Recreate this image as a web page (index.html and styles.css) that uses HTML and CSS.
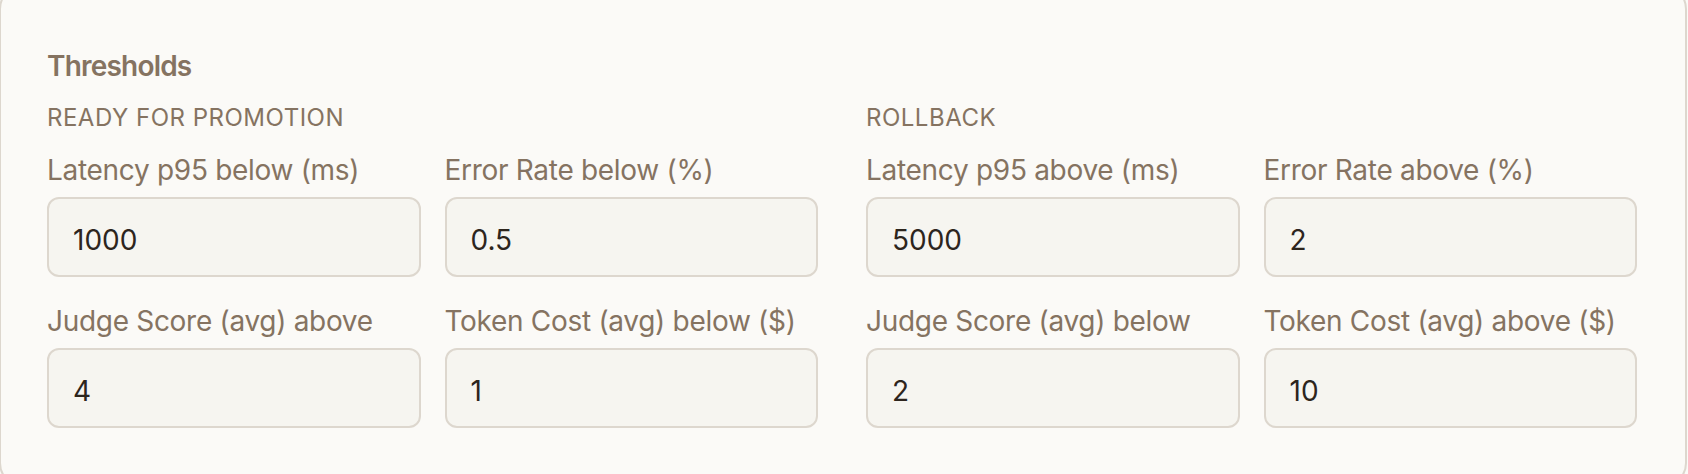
FILE: index.html
```html
<!DOCTYPE html>
<html lang="en">
<head>
<meta charset="utf-8">
<title>Thresholds</title>
<link rel="stylesheet" href="styles.css">
</head>
<body>
<section class="card">
  <h2 class="card-title">Thresholds</h2>
  <div class="groups">
    <div class="group">
      <h3 class="group-title">READY FOR PROMOTION</h3>
      <div class="fields">
        <label class="field"><span class="field-label">Latency p95 below (ms)</span><input class="field-input" type="text" value="1000"></label>
        <label class="field"><span class="field-label">Error Rate below (%)</span><input class="field-input" type="text" value="0.5"></label>
        <label class="field"><span class="field-label">Judge Score (avg) above</span><input class="field-input" type="text" value="4"></label>
        <label class="field"><span class="field-label">Token Cost (avg) below ($)</span><input class="field-input" type="text" value="1"></label>
      </div>
    </div>
    <div class="group">
      <h3 class="group-title">ROLLBACK</h3>
      <div class="fields">
        <label class="field"><span class="field-label">Latency p95 above (ms)</span><input class="field-input" type="text" value="5000"></label>
        <label class="field"><span class="field-label">Error Rate above (%)</span><input class="field-input" type="text" value="2"></label>
        <label class="field"><span class="field-label">Judge Score (avg) below</span><input class="field-input" type="text" value="2"></label>
        <label class="field"><span class="field-label">Token Cost (avg) above ($)</span><input class="field-input" type="text" value="10"></label>
      </div>
    </div>
  </div>
</section>
</body>
</html>
```

FILE: styles.css
```css
html, body {
  margin: 0;
  padding: 0;
  background: #fbfaf7;
  overflow: hidden;
}

body {
  width: 1688px;
  height: 474px;
  font-family: Inter, "Liberation Sans", sans-serif;
}

.card {
  box-sizing: border-box;
  width: 1688px;
  margin: -15px 0 0 -1px;
  padding: 59px 48px 57px 46px;
  background: #fbfaf7;
  border: 2px solid #ddd7ce;
  border-radius: 24px;
}

.card-title {
  margin: 0 0 16px;
  font-size: 28px;
  line-height: 40px;
  font-weight: 600;
  letter-spacing: -0.8px;
  color: #857361;
}

.groups {
  display: grid;
  grid-template-columns: 1fr 1fr;
  column-gap: 48px;
}

.group-title {
  margin: 0 0 16px;
  font-size: 24px;
  line-height: 32px;
  font-weight: 400;
  letter-spacing: 0.5px;
  color: #857361;
}

.fields {
  display: grid;
  grid-template-columns: 1fr 1fr;
  column-gap: 24px;
  row-gap: 24px;
}

.field {
  display: flex;
  flex-direction: column;
  gap: 7px;
}

.field-label {
  font-size: 28px;
  line-height: 40px;
  letter-spacing: -0.3px;
  color: #857361;
}

.field-input {
  box-sizing: border-box;
  width: 100%;
  height: 80px;
  margin: 0;
  padding: 5px 24px 0;
  font-family: Inter, "Liberation Sans", sans-serif;
  font-size: 28px;
  color: #2d251d;
  background: #f6f5f0;
  border: 2px solid #ddd7ce;
  border-radius: 12px;
  outline: none;
}
```
